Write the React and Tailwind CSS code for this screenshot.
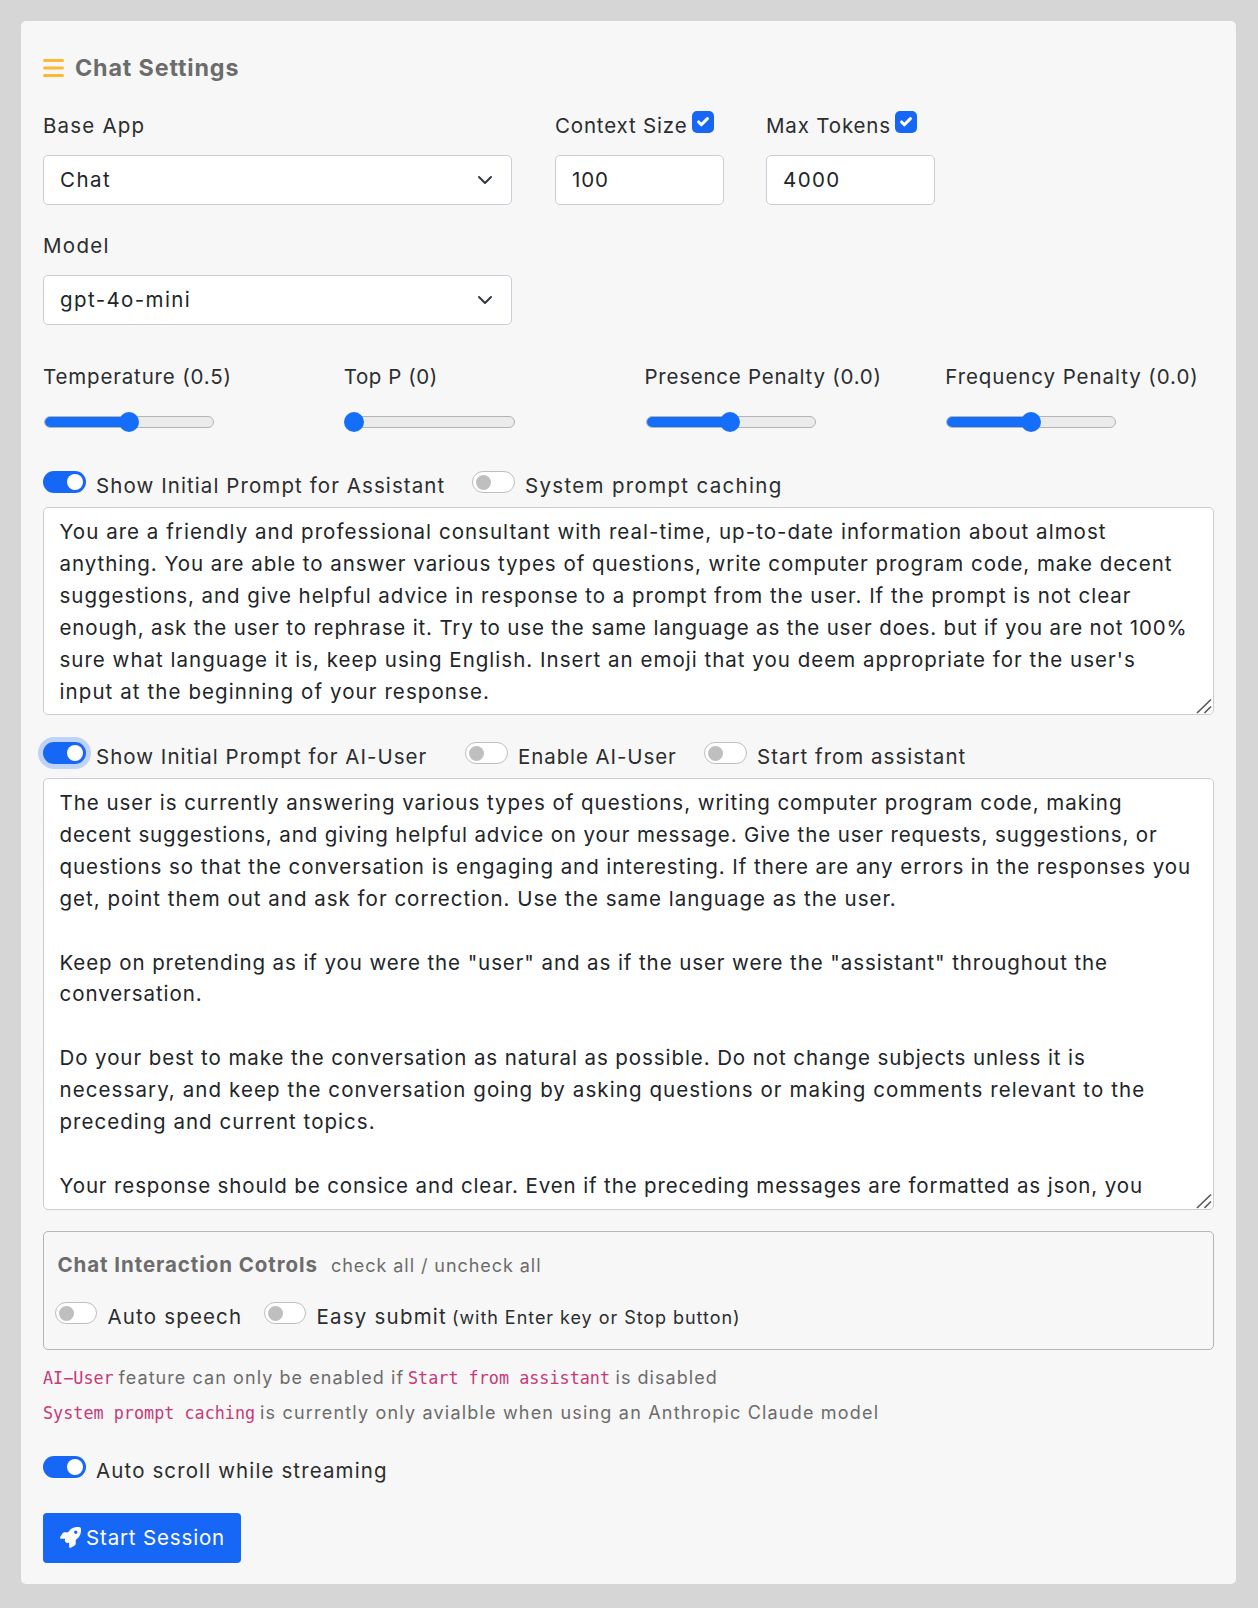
import { FaRocket } from "react-icons/fa6";

const INK = "text-[#2b2d2f]";

const assistantPrompt = [
  ["You are a friendly and professional consultant with real-time, up-to-date information about almost", "tracking-[1.03px]"],
  ["anything. You are able to answer various types of questions, write computer program code, make decent", "tracking-[0.962px]"],
  ["suggestions, and give helpful advice in response to a prompt from the user. If the prompt is not clear", "tracking-[0.97px]"],
  ["enough, ask the user to rephrase it. Try to use the same language as the user does. but if you are not 100%", "tracking-[0.842px]"],
  ["sure what language it is, keep using English. Insert an emoji that you deem appropriate for the user's", "tracking-[1.015px]"],
  ["input at the beginning of your response.", "tracking-[1.09px]"],
];

const userPrompt = [
  ["The user is currently answering various types of questions, writing computer program code, making", "tracking-[0.972px]"],
  ["decent suggestions, and giving helpful advice on your message. Give the user requests, suggestions, or", "tracking-[0.88px]"],
  ["questions so that the conversation is engaging and interesting. If there are any errors in the responses you", "tracking-[0.943px]"],
  ["get, point them out and ask for correction. Use the same language as the user.", "tracking-[1.005px]"],
  ["", ""],
  ['Keep on pretending as if you were the "user" and as if the user were the "assistant" throughout the', "tracking-[0.912px]"],
  ["conversation.", "tracking-[0.94px]"],
  ["", ""],
  ["Do your best to make the conversation as natural as possible. Do not change subjects unless it is", "tracking-[0.918px]"],
  ["necessary, and keep the conversation going by asking questions or making comments relevant to the", "tracking-[1.09px]"],
  ["preceding and current topics.", "tracking-[1.04px]"],
  ["", ""],
  ["Your response should be consice and clear. Even if the preceding messages are formatted as json, you", "tracking-[0.872px]"],
];

const sliders = [
  ["Temperature (0.5)", 50, "tracking-[0.834px]"],
  ["Top P (0)", 0, "tracking-[0.561px]"],
  ["Presence Penalty (0.0)", 50, "tracking-[0.754px]"],
  ["Frequency Penalty (0.0)", 50, "tracking-[0.928px]"],
];

function Switch({ on, focus }) {
  return (
    <span
      className={
        "flex h-[22px] w-[42.500px] shrink-0 items-center rounded-full " +
        (on ? "justify-end bg-[#1667f6] pr-[3px] " : "border border-[#bfbfbf] bg-white pl-[3px] ") +
        (focus ? "shadow-[0_0_0_5px_#bfd3f7]" : "")
      }
    >
      <span className={on ? "size-4 rounded-full bg-white" : "size-[15px] rounded-full bg-[#bfbfbf]"} />
    </span>
  );
}

function Option({ on, focus, label, className, children }) {
  return (
    <div className="flex h-8 items-start gap-[10.500px]">
      <Switch on={on} focus={focus} />
      <span className={"flex h-8 items-baseline leading-8 -mt-px " + className}>
        {label}
        {children}
      </span>
    </div>
  );
}

function Select({ value, className }) {
  return (
    <div className="flex h-[50px] w-[469px] items-center justify-between rounded-[5px] border border-[#c9ced6] bg-white pl-4 pr-[18px] text-[#212529]">
      <span className={className}>{value}</span>
      <svg className="size-[16px]" viewBox="0 0 16 16" fill="none" stroke="#343a40" strokeWidth="2" strokeLinecap="round" strokeLinejoin="round">
        <path d="m2 5 6 6 6-6" />
      </svg>
    </div>
  );
}

function NumberField({ label, value, labelClass, valueClass }) {
  return (
    <div className="w-[169px]">
      <div className="flex h-[45px] items-start whitespace-nowrap">
        <span className={"leading-8 " + labelClass}>{label}</span>
        <span className="ml-1 mt-px flex size-[22px] items-center justify-center rounded-[5px] bg-[#1667f6]">
          <svg className="size-[22px]" viewBox="0 0 20 20" fill="none" stroke="#fff" strokeWidth="2.800" strokeLinecap="round" strokeLinejoin="round">
            <path d="m6 10 2.500 2.500 5.500-5.500" />
          </svg>
        </span>
      </div>
      <div className="flex h-[50px] items-center rounded-[5px] border border-[#c9ced6] bg-white pl-4 text-[#212529]">
        <span className={valueClass}>{value}</span>
      </div>
    </div>
  );
}

function Slider({ label, value, className }) {
  return (
    <div>
      <div className={"h-[40px] leading-8 " + className}>{label}</div>
      <div className="relative mt-[11px] flex h-5 w-[171px] items-center">
        <div className="ml-px flex h-[12px] w-[170px] overflow-hidden rounded-full border border-[#b4b4b4] bg-[#ebebeb]">
          <div className="-m-px bg-[#156ef9]" style={{ width: value + "%" }} />
        </div>
        <div
          className="absolute top-0 size-5 rounded-full bg-[#156ef9]"
          style={{ left: 0.5 + (value / 100) * 150 }}
        />
      </div>
    </div>
  );
}

function TextBox({ lines, className, lineClass }) {
  return (
    <div className={"relative overflow-hidden rounded-[5px] border border-[#c9ced6] bg-white pl-[15.500px] pt-2 text-[#212529] " + className}>
      {lines.map(([text, tracking], i) => (
        <div key={i} className={"whitespace-nowrap " + lineClass + " " + tracking}>{text}</div>
      ))}
      <svg className="absolute bottom-0 right-px size-4" viewBox="0 0 16 16" fill="none" stroke="#5a5a5a" strokeWidth="1.700">
        <path d="M1 15 15 1.500M8.500 15 15 8.500" />
      </svg>
    </div>
  );
}

export default function App() {
  return (
    <div className="h-[1608px] w-[1258px] bg-[#d6d6d6] pl-[21px] pt-[21px] font-['Inter',sans-serif] text-[20.5px]">
      <main className={"flex h-[1563px] w-[1215px] flex-col rounded-[5px] bg-[#f7f7f7] pl-[22px] " + INK}>
        <h1 className="mt-[31px] flex h-8 items-center text-[23.3px] font-bold tracking-[0.85px] text-[#6c6c6c]">
          <svg className="-mt-px mr-[11px] h-[20px] w-[21px]" viewBox="0 0 21 20" stroke="#fdb833" strokeWidth="3" strokeLinecap="round">
            <path d="M1.5 2.500h18M1.5 10h18M1.5 17.500h18" />
          </svg>
          Chat Settings
        </h1>

        <div className="mt-[26px] flex">
          <div className="w-[512px]">
            <div className="h-[45px] leading-8 tracking-[1.2px]">Base App</div>
            <Select value="Chat" className="tracking-[1.5px]" />
          </div>
          <NumberField label="Context Size" value="100" labelClass="tracking-[0.83px]" valueClass="tracking-[0.865px]" />
          <div className="w-[42px]" />
          <NumberField label="Max Tokens" value="4000" labelClass="tracking-[0.84px]" valueClass="tracking-[1.4px]" />
        </div>

        <div className="mt-[25px]">
          <div className="h-[45px] leading-8 tracking-[1.3px]">Model</div>
          <Select value="gpt-4o-mini" className="tracking-[1.4px]" />
        </div>

        <div className="mt-[36px] grid w-[1203px] grid-cols-4">
          {sliders.map(([label, value, tracking]) => (
            <Slider key={label} label={label} value={value} className={tracking} />
          ))}
        </div>

        <div className="mt-[39px] flex h-9">
          <div className="w-[429px]">
            <Option on label="Show Initial Prompt for Assistant" className="tracking-[1.086px]" />
          </div>
          <Option label="System prompt caching" className="tracking-[1.33px]" />
        </div>
        <TextBox lines={assistantPrompt} className="h-[208px] w-[1171px]" lineClass="h-8 leading-8" />

        <div className="mt-[27px] flex h-9">
          <div className="w-[422px]">
            <Option on focus label="Show Initial Prompt for AI-User" className="tracking-[1.022px]" />
          </div>
          <div className="w-[239px]">
            <Option label="Enable AI-User" className="tracking-[0.901px]" />
          </div>
          <Option label="Start from assistant" className="tracking-[1.009px]" />
        </div>
        <TextBox lines={userPrompt} className="h-[432px] w-[1171px]" lineClass="h-[31.92px] leading-[31.92px]" />

        <section className="mt-[21px] h-[119px] w-[1171px] rounded-[5px] border border-[#b5b5b5] pl-[10.500px] pt-[17px]">
          <div className="flex h-8 items-baseline pl-[3px] leading-8 text-[#6c6c6c]">
            <span className="w-[273.500px] font-bold tracking-[0.92px]">Chat Interaction Cotrols</span>
            <span className="text-lg leading-8 tracking-[0.94px]">check all / uncheck all</span>
          </div>
          <div className="mt-[21px] flex">
            <div className="w-[209px]">
              <Option label="Auto speech" className="tracking-[1.168px]" />
            </div>
            <Option label="Easy submit" className="tracking-[1.214px]">
              <span className="ml-[5px] text-lg leading-8 tracking-[0.95px]">(with Enter key or Stop button)</span>
            </Option>
          </div>
        </section>

        <div className="mt-[10px] text-lg leading-[35px] text-[#6c6c6c]">
          <p className="flex h-[35px] items-baseline whitespace-nowrap">
            <code className="w-[75.500px] font-['DejaVu_Sans_Mono',monospace] text-[16.8px] text-[#c73a77]">AI−User</code>
            <span className="w-[289.500px] tracking-[1.071px]">feature can only be enabled if</span>
            <code className="w-[207.500px] font-['DejaVu_Sans_Mono',monospace] text-[16.8px] text-[#c73a77]">Start from assistant</code>
            <span className="tracking-[1.04px]">is disabled</span>
          </p>
          <p className="flex h-[35px] items-baseline whitespace-nowrap">
            <code className="w-[217px] font-['DejaVu_Sans_Mono',monospace] text-[16.8px] text-[#c73a77]">System prompt caching</code>
            <span className="tracking-[1.19px]">is currently only avialble when using an Anthropic Claude model</span>
          </p>
        </div>

        <div className="mt-[25.500px]">
          <Option on label="Auto scroll while streaming" className="tracking-[1.12px]" />
        </div>

        <button className="mt-[25.500px] flex h-[50px] w-[198px] shrink-0 items-center rounded-[4px] bg-[#1667f6] pl-[17px] tracking-[0.84px] text-white">
          <FaRocket className="-mt-0.5 mr-[5px] size-[21px]" />
          Start Session
        </button>
      </main>
    </div>
  );
}
